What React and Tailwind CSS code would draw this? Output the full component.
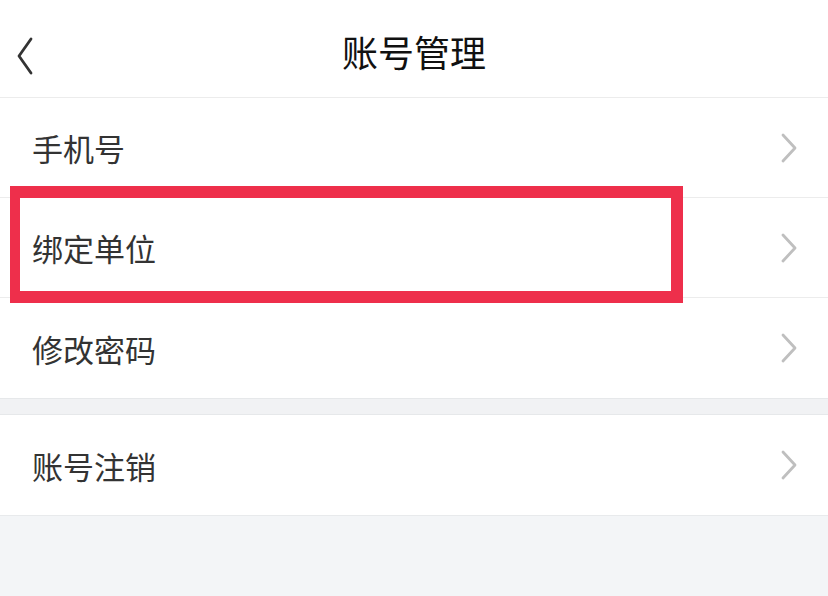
import React from "react";

const Chevron = () => (
  <svg width="18" height="30" viewBox="0 0 18 30" className="shrink-0">
    <path d="M3 2 L15 15 L3 28" fill="none" stroke="#bfbfbf" strokeWidth="2.8" strokeLinecap="round" strokeLinejoin="round" />
  </svg>
);

const Row = ({ label, last }) => (
  <div className={"flex h-[100px] items-center justify-between bg-white pl-[32px] pr-[30px] " + (last ? "" : "border-b border-[#ececec]")}>
    <span className="text-[31px] leading-none text-[#333333]">{label}</span>
    <Chevron />
  </div>
);

export default function App() {
  return (
    <div
      className="relative h-[596px] w-[828px] overflow-hidden bg-[#f3f5f7]"
      style={{ fontFamily: '"Noto Sans CJK SC", "Noto Sans", sans-serif' }}
    >
      <div className="relative flex h-[98px] items-center justify-center border-b border-[#ececec] bg-white">
        <svg width="20" height="38" viewBox="0 0 20 38" className="absolute left-[16px] top-[37px]">
          <path d="M15 2 L3 19 L15 36" fill="none" stroke="#333333" strokeWidth="2.8" strokeLinecap="round" strokeLinejoin="round" />
        </svg>
        <span className="pt-[4px] text-[36px] leading-none text-[#111111]">账号管理</span>
      </div>
      <div className="bg-white">
        <Row label="手机号" />
        <Row label="绑定单位" />
        <Row label="修改密码" last />
      </div>
      <div className="h-[17px] border-y border-[#e6e8ea] bg-[#f1f2f4]" />
      <div className="border-b border-[#e8eaec] bg-white">
        <Row label="账号注销" last />
      </div>
      <div className="pointer-events-none absolute left-[10px] top-[186px] h-[117px] w-[673px] border-[10px] border-y-[12px] border-r-[12px] border-[#ee2f4b]" />
    </div>
  );
}
